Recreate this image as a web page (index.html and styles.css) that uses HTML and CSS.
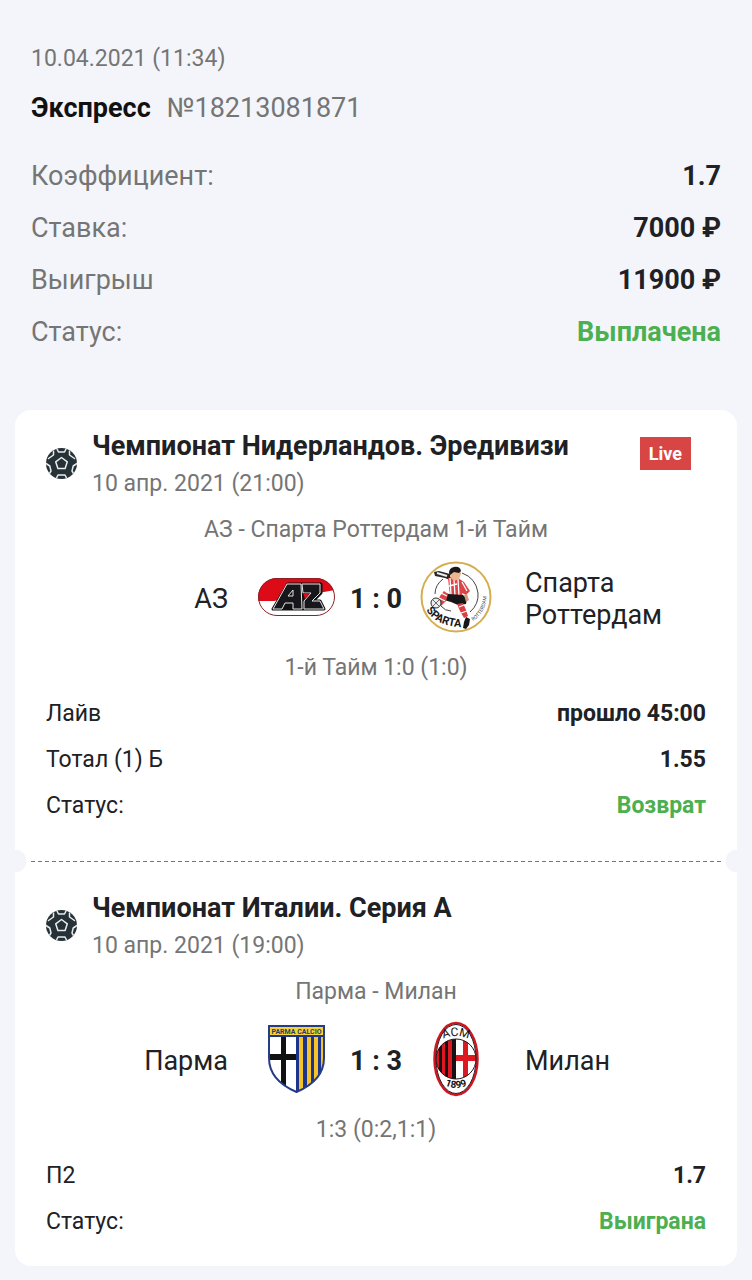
FILE: index.html
```html
<!DOCTYPE html>
<html lang="ru">
<head>
<meta charset="utf-8">
<meta name="viewport" content="width=device-width, initial-scale=1">
<title>Экспресс №18213081871</title>
<link rel="stylesheet" href="styles.css">
</head>
<body>
<svg class="defs" aria-hidden="true">
  <symbol id="ball" viewBox="0 0 31 31">
    <clipPath id="ball-clip"><circle cx="15.500" cy="15.500" r="15.500"/></clipPath>
    <circle cx="15.500" cy="15.500" r="15.500" fill="#263238"/>
    <g clip-path="url(#ball-clip)" fill="none" stroke="#e8edef" stroke-width="1.500" stroke-linejoin="round" stroke-linecap="round">
      <path d="M15.500 9.500l5.800 4.300-2.200 6.700h-7.200l-2.200-6.700z"/>
      <path d="M11 1l1.500 3h6L20 1"/>
      <path d="M23.500 3v4l5 3.500"/>
      <path d="M7.500 3v4l-5 3.500"/>
      <path d="M31 15.500l-3.800 2.500-1.200 5 1.500 2.500"/>
      <path d="M0 15.500L3.800 18 5 23l-1.500 2.500"/>
      <path d="M10.500 30l1.500-3h7l1.500 3"/>
    </g>
  </symbol>
</svg>
<main class="page">
  <header class="summary">
    <time class="summary-date">10.04.2021 (11:34)</time>
    <h1 class="summary-title"><strong>Экспресс</strong> <span>№18213081871</span></h1>
    <dl class="totals">
      <div class="row"><dt>Коэффициент:</dt><dd>1.7</dd></div>
      <div class="row"><dt>Ставка:</dt><dd>7000 ₽</dd></div>
      <div class="row"><dt>Выигрыш</dt><dd>11900 ₽</dd></div>
      <div class="row"><dt>Статус:</dt><dd class="good">Выплачена</dd></div>
    </dl>
  </header>

  <section class="ticket">
    <article class="event">
      <header class="event-head">
        <svg class="ball" aria-hidden="true"><use href="#ball"/></svg>
        <div class="event-name">
          <h2>Чемпионат Нидерландов. Эредивизи</h2>
          <time>10 апр. 2021 (21:00)</time>
        </div>
        <span class="live">Live</span>
      </header>
      <p class="note">АЗ - Спарта Роттердам 1-й Тайм</p>
      <div class="match">
        <span class="team home">АЗ</span>
        <svg class="crest" viewBox="0 0 80 78" role="img" aria-label="АЗ">
          <clipPath id="az-clip"><rect x="2" y="20" width="77" height="38" rx="19"/></clipPath>
          <g clip-path="url(#az-clip)">
            <rect x="2" y="20" width="77" height="38" fill="#fff"/>
            <path d="M2 20h77v12L18 43 2 43z" fill="#dc0b18"/>
          </g>
          <rect x="2.500" y="20.500" width="76" height="37" rx="18.500" fill="none" stroke="#8d2024"/>
          <g fill="#111" stroke="#111" stroke-width="3" stroke-linejoin="round">
            <path d="M17 51L32 26h33v9l-8 8h7l4 8z"/>
          </g>
          <g fill="#17171b" fill-rule="evenodd" stroke="#e5e5e5" stroke-width="1" stroke-linejoin="round">
            <path d="M17 51L31 26h14l1 25h-9v-6h-8l-3 6zM32 38h5v-6z"/>
            <path d="M46 26h18v9l-8 8h8l4 8H48v-8l7-8h-8z"/>
          </g>
          <path d="M47 35h7l-5 6z" fill="#dc0b18"/>
        </svg>
        <strong class="score">1 : 0</strong>
        <svg class="crest" viewBox="0 0 80 78" role="img" aria-label="Спарта Роттердам">
          <circle cx="40" cy="39" r="34.500" fill="#fff" stroke="#d4ae50" stroke-width="2"/>
          <path d="M19 36q0-9 8-15M46 15q14 5 16 20 1 11-8 19M35 53q-6 0-10-5" fill="none" stroke="#444" stroke-width="1"/>
          <path d="M18 14l5-1 11 3 4 3-2 4-7-3-10-2z" fill="#29272a"/>
          <path d="M21 15l10 3" stroke="#eee" stroke-width="2"/>
          <path d="M32 20h10l6 4 6 9-4 4-4-2 1 4-13-2-1-8z" fill="#dd4448"/>
          <path d="M34 20l1 17M38 21l1 17M42 21l1 17M46 24l5 9M33 28l8-2" stroke="#fff" stroke-width="1.300"/>
          <path d="M34 14q2-4 6-4 5 1 5 6l-2 5-5 2-4-4z" fill="#edb58f"/>
          <path d="M33 15q0-5 5-6 6-1 7 4l-2 2-5-1-4 3z" fill="#1b191b"/>
          <path d="M33 36l14 1 4 4-1 5-8 1-7-3-7-2 1-7z" fill="#171719"/>
          <path d="M51 36l2 6-3 2-2-7z" fill="#d99979"/>
          <path d="M28 33l4 3-2 7-5 5-4-3 3-7z" fill="#dd4448"/>
          <path d="M25 35l6 3M23 40l6 3" stroke="#fff" stroke-width="1.300"/>
          <path d="M41 46l6-1 3 7 2 6-4 2-4-7z" fill="#d93f43"/>
          <path d="M43 49l5-2M45 55l6-2" stroke="#fff" stroke-width="1.300"/>
          <path d="M50 59l4 2-1 6-3 4-3-1 1-6z" fill="#171719"/>
          <circle cx="20" cy="45" r="5" fill="#eee" stroke="#302d30"/>
          <path d="M17 42l6 6M23 42l-6 6" stroke="#666"/>
          <path id="sparta-arc" d="M10 52Q21 69 48 69" fill="none"/>
          <text class="sparta-name"><textPath href="#sparta-arc">SPARTA</textPath></text>
          <path id="rotterdam-arc" d="M57 63A29 29 0 0 0 70 33" fill="none"/>
          <text class="sparta-city"><textPath href="#rotterdam-arc">ROTTERDAM</textPath></text>
        </svg>
        <span class="team">Спарта Роттердам</span>
      </div>
      <p class="note">1-й Тайм 1:0 (1:0)</p>
      <dl class="details">
        <div class="row"><dt>Лайв</dt><dd>прошло 45:00</dd></div>
        <div class="row"><dt>Тотал (1) Б</dt><dd>1.55</dd></div>
        <div class="row"><dt>Статус:</dt><dd class="good">Возврат</dd></div>
      </dl>
    </article>

    <div class="tear" aria-hidden="true"></div>

    <article class="event">
      <header class="event-head">
        <svg class="ball" aria-hidden="true"><use href="#ball"/></svg>
        <div class="event-name">
          <h2>Чемпионат Италии. Серия А</h2>
          <time>10 апр. 2021 (19:00)</time>
        </div>
      </header>
      <p class="note">Парма - Милан</p>
      <div class="match">
        <span class="team home">Парма</span>
        <svg class="crest" viewBox="0 0 80 78" role="img" aria-label="Парма">
          <clipPath id="parma-clip"><path d="M13 6h55v32c0 16-11 27-27.500 34C24 65 13 54 13 38z"/></clipPath>
          <g clip-path="url(#parma-clip)">
            <path d="M13 5h56v68H13z" fill="#fff"/>
            <path d="M25 17h5v55h-5zM13 34h27v6H13z" fill="#111"/>
            <path d="M40 17h29v56H40z" fill="#1d358c"/>
            <path d="M43 17h4v56h-4zM51 17h4v56h-4zM58 17h4v56h-4zM65 17h3v56h-3z" fill="#f3c52a"/>
            <path d="M13 6h56v10H13z" fill="#f7d335"/>
            <path d="M13 16h56" stroke="#1d358c" stroke-width="2"/>
          </g>
          <path d="M13 6h55v32c0 16-11 27-27.500 34C24 65 13 54 13 38z" fill="none" stroke="#253c87" stroke-width="2"/>
          <text class="parma-name" x="40.500" y="14">PARMA CALCIO</text>
        </svg>
        <strong class="score">1 : 3</strong>
        <svg class="crest" viewBox="0 0 80 78" role="img" aria-label="Милан">
          <ellipse cx="40" cy="39" rx="21.500" ry="36" fill="#fff" stroke="#cf1721" stroke-width="2.500"/>
          <ellipse cx="40" cy="39" rx="20" ry="34.500" fill="none" stroke="#29191d" stroke-width="1"/>
          <clipPath id="milan-clip"><ellipse cx="40" cy="39" rx="20" ry="20"/></clipPath>
          <g clip-path="url(#milan-clip)">
            <path d="M20 18h20v42H20z" fill="#dc1821"/>
            <path d="M23 18h3v42h-3zM29 18h3v42h-3zM36 18h4v42h-4z" fill="#171114"/>
            <path d="M40 18h21v42H40z" fill="#fff"/>
            <path d="M40 35h21v6H40zM47 18h5v42h-5z" fill="#dc1821"/>
          </g>
          <ellipse cx="40" cy="39" rx="20" ry="20" fill="none" stroke="#24171a"/>
          <path id="acm-arc" d="M27 19Q40 13 53 19" fill="none"/>
          <text class="milan-name"><textPath href="#acm-arc" startOffset="50%">ACM</textPath></text>
          <path id="year-arc" d="M26 64Q40 72 54 64" fill="none"/>
          <text class="milan-year"><textPath href="#year-arc" startOffset="50%">1899</textPath></text>
        </svg>
        <span class="team">Милан</span>
      </div>
      <p class="note">1:3 (0:2,1:1)</p>
      <dl class="details">
        <div class="row"><dt>П2</dt><dd>1.7</dd></div>
        <div class="row"><dt>Статус:</dt><dd class="good">Выиграна</dd></div>
      </dl>
    </article>
  </section>
</main>
</body>
</html>
```
FILE: styles.css
```css
:root {
  --bg: #f4f5fa;
  --text: #202124;
  --muted: #757575;
  --good: #4caf50;
}

* { box-sizing: border-box; }

body {
  margin: 0;
  background: var(--bg);
  color: var(--text);
  font-family: Roboto, "Noto Sans", sans-serif;
  font-size: 23px;
  line-height: 26px;
}

h1, h2, p, dl, dd { margin: 0; }

.defs { position: absolute; width: 0; height: 0; }

.page { padding: 46px 15px 14px; }

.summary { padding: 0 16px; color: var(--muted); }
.summary-date { display: block; }
.summary-title {
  display: flex;
  gap: 16px;
  margin-top: 20px;
  font-size: 27px;
  font-weight: 400;
  line-height: 32px;
}
.summary-title strong { color: #111; font-weight: 700; }

.row { display: flex; justify-content: space-between; }
.row dd { color: var(--text); font-weight: 700; }
.row .good { color: var(--good); }

.totals { margin-top: 26px; font-size: 27px; line-height: 52px; }

.ticket {
  margin-top: 52px;
  border-radius: 16px;
  background: #fff;
}

.event { padding: 20px 31px 21px; }

.event-head { display: flex; align-items: center; gap: 15px; }
.ball { flex: none; width: 31px; height: 31px; }
.event-name { flex: 1; color: var(--muted); }
.event-name h2 {
  margin-bottom: 9px;
  color: var(--text);
  font-size: 27px;
  font-weight: 700;
  line-height: 32px;
}
.event-name time { display: block; }

.live {
  align-self: flex-start;
  margin: 7px 15px 0 0;
  padding: 0 9px;
  background: #d84545;
  color: #fff;
  font-size: 18px;
  font-weight: 700;
  line-height: 33px;
}

.note { color: var(--muted); text-align: center; }
.event-head + .note { margin-top: 20px; }

.match {
  display: grid;
  grid-template-columns: 1fr 80px 80px 80px 1fr;
  align-items: center;
  margin: 15px 0 19px;
  font-size: 27px;
  line-height: 32px;
}
.team { padding: 4px 0 0 29px; }
.home { padding: 4px 28px 0 0; text-align: right; }
.crest { display: block; width: 80px; height: 78px; }
.score { padding-top: 4px; text-align: center; white-space: nowrap; }

.details { margin-top: 10px; line-height: 46px; }

.tear {
  height: 22px;
  background:
    radial-gradient(circle at 0 50%, var(--bg) 11px, transparent 12px),
    radial-gradient(circle at 100% 50%, var(--bg) 11px, transparent 12px),
    repeating-linear-gradient(90deg, #777 0 4px, transparent 4px 7px) center / calc(100% - 32px) 1px no-repeat;
}

.sparta-name { font: 700 11px Roboto, sans-serif; fill: #171719; }
.sparta-city { font: 5px Roboto, sans-serif; fill: #444; }
.parma-name { font: 700 7px Roboto, sans-serif; fill: #253c67; text-anchor: middle; }
.milan-name { font: 12px Roboto, sans-serif; fill: #171114; text-anchor: middle; }
.milan-year { font: 700 10px Roboto, sans-serif; fill: #171114; text-anchor: middle; }
```
